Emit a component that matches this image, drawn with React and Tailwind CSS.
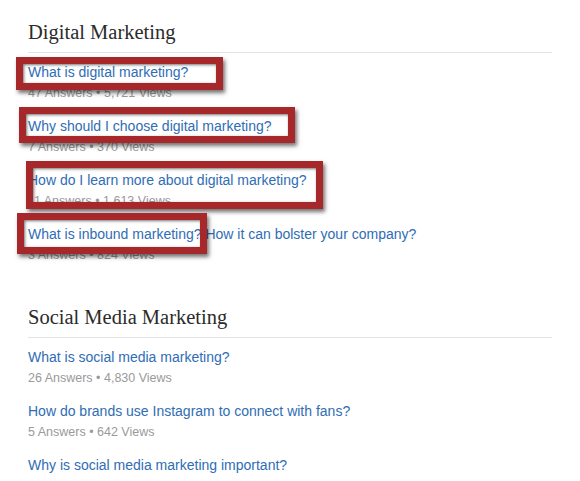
const sections = [
  {
    title: "Digital Marketing",
    questions: [
      { q: "What is digital marketing?", answers: 47, views: "5,721" },
      { q: "Why should I choose digital marketing?", answers: 7, views: "370" },
      { q: "How do I learn more about digital marketing?", answers: 11, views: "1,613" },
      { q: "What is inbound marketing? How it can bolster your company?", answers: 3, views: "824" },
    ],
  },
  {
    title: "Social Media Marketing",
    questions: [
      { q: "What is social media marketing?", answers: 26, views: "4,830" },
      { q: "How do brands use Instagram to connect with fans?", answers: 5, views: "642" },
      { q: "Why is social media marketing important?" },
    ],
  },
];

// red annotation boxes drawn over the first list
const marks = [
  { left: 16, top: 57, width: 207, height: 33 },
  { left: 19, top: 107, width: 276, height: 36 },
  { left: 26, top: 161, width: 297, height: 48 },
  { left: 17, top: 213, width: 190, height: 41 },
];

export default function App() {
  return (
    <div className="relative h-[481px] w-[580px] overflow-hidden bg-white pl-[28px] pt-[18px] font-['Liberation_Sans',Arial,sans-serif]">
      <div className="flex w-[524px] flex-col gap-[37px]">
        {sections.map((section) => (
          <section key={section.title}>
            <h2 className="border-b border-[#e3e3e3] pb-[6px] font-['Liberation_Serif',Georgia,serif] text-[20.5px] leading-[28px] text-[#2b2b2b]">
              {section.title}
            </h2>
            <ul className="flex flex-col gap-3 pt-[9px]">
              {section.questions.map((item) => (
                <li key={item.q}>
                  <a href="#" className="block whitespace-nowrap text-[14px] leading-[20px] text-[#2f6db5]">
                    {item.q}
                  </a>
                  {item.answers != null && (
                    <p className="text-[12.5px] leading-[22px] text-[#9a9a9a]">
                      {item.answers} Answers • {item.views} Views
                    </p>
                  )}
                </li>
              ))}
            </ul>
          </section>
        ))}
      </div>

      {marks.map((m, i) => (
        <div
          key={i}
          className="pointer-events-none absolute border-[7px] border-[#a6282a] shadow-[2px_3px_4px_rgba(0,0,0,0.55),inset_1px_1px_3px_rgba(0,0,0,0.55)]"
          style={{ left: m.left, top: m.top, width: m.width, height: m.height }}
        />
      ))}
    </div>
  );
}
